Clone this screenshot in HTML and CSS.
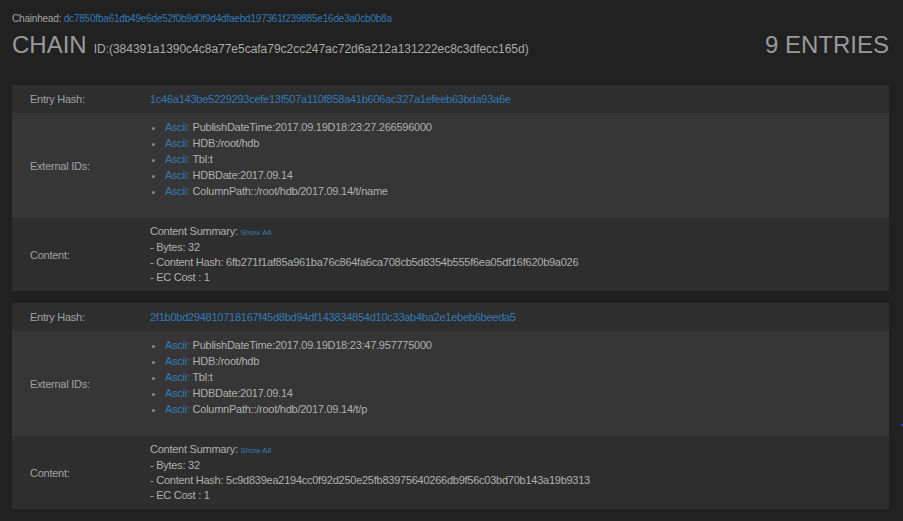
FILE: index.html
```html
<!DOCTYPE html>
<html lang="en">
<head>
<meta charset="utf-8">
<title>Chain</title>
<link rel="stylesheet" href="styles.css">
</head>
<body>
<div class="page">
  <header class="chain-header">
    <div class="chainhead">Chainhead: <a href="#" class="link">dc7850fba61db49e6de52f0b9d0f9d4dfaebd197361f239885e16de3a0cb0b8a</a></div>
    <div class="title-row">
      <h1 class="chain-title"><span class="chain-word">CHAIN</span><span class="chain-id">ID:(384391a1390c4c8a77e5cafa79c2cc247ac72d6a212a131222ec8c3dfecc165d)</span></h1>
      <div class="entries-count">9 ENTRIES</div>
    </div>
  </header>

  <table class="entry">
    <tr class="row-hash">
      <td class="label">Entry Hash:</td>
      <td class="value"><a href="#" class="link">1c46a143be5229293cefe13f507a110f858a41b606ac327a1efeeb63bda93a6e</a></td>
    </tr>
    <tr class="row-ids">
      <td class="label">External IDs:</td>
      <td class="value">
        <ul class="ext-ids">
          <li><span class="enc">Ascii:</span> PublishDateTime:2017.09.19D18:23:27.266596000</li>
          <li><span class="enc">Ascii:</span> HDB:/root/hdb</li>
          <li><span class="enc">Ascii:</span> Tbl:t</li>
          <li><span class="enc">Ascii:</span> HDBDate:2017.09.14</li>
          <li><span class="enc">Ascii:</span> ColumnPath::/root/hdb/2017.09.14/t/name</li>
        </ul>
      </td>
    </tr>
    <tr class="row-content">
      <td class="label">Content:</td>
      <td class="value content">
        <div>Content Summary: <a href="#" class="show-all">Show All</a></div>
        <div>- Bytes: 32</div>
        <div>- Content Hash: 6fb271f1af85a961ba76c864fa6ca708cb5d8354b555f6ea05df16f620b9a026</div>
        <div>- EC Cost : 1</div>
      </td>
    </tr>
  </table>

  <table class="entry">
    <tr class="row-hash">
      <td class="label">Entry Hash:</td>
      <td class="value"><a href="#" class="link">2f1b0bd294810718167f45d8bd94df143834854d10c33ab4ba2e1ebeb6beeda5</a></td>
    </tr>
    <tr class="row-ids">
      <td class="label">External IDs:</td>
      <td class="value">
        <ul class="ext-ids">
          <li><span class="enc">Ascii:</span> PublishDateTime:2017.09.19D18:23:47.957775000</li>
          <li><span class="enc">Ascii:</span> HDB:/root/hdb</li>
          <li><span class="enc">Ascii:</span> Tbl:t</li>
          <li><span class="enc">Ascii:</span> HDBDate:2017.09.14</li>
          <li><span class="enc">Ascii:</span> ColumnPath::/root/hdb/2017.09.14/t/p</li>
        </ul>
      </td>
    </tr>
    <tr class="row-content">
      <td class="label">Content:</td>
      <td class="value content">
        <div>Content Summary: <a href="#" class="show-all">Show All</a></div>
        <div>- Bytes: 32</div>
        <div>- Content Hash: 5c9d839ea2194cc0f92d250e25fb83975640266db9f56c03bd70b143a19b9313</div>
        <div>- EC Cost : 1</div>
      </td>
    </tr>
  </table>
</div>
<span class="edge-mark"></span>
</body>
</html>
```

FILE: styles.css
```css
html, body {
  margin: 0;
  padding: 0;
  background: #212121;
}

body {
  font-family: "Liberation Sans", Arial, sans-serif;
  color: #a9a9a9;
  font-size: 11px;
  position: relative;
  min-height: 521px;
}

.page {
  padding: 12px 14px 12px 12px;
}

.link {
  color: #337ab7;
  text-decoration: none;
}

.chainhead {
  font-size: 10px;
  letter-spacing: -0.2px;
  line-height: 14px;
  color: #a5a5a5;
}

.title-row {
  display: flex;
  align-items: baseline;
  justify-content: space-between;
  margin-top: 6px;
  margin-bottom: 23px;
}

.chain-title {
  margin: 0;
  display: flex;
  align-items: baseline;
  gap: 7px;
  font-weight: normal;
  line-height: 26px;
}

.chain-word {
  font-size: 24px;
  color: #9a9a9a;
}

.chain-id {
  font-size: 12px;
  color: #aaaaaa;
  letter-spacing: -0.02px;
}

.entries-count {
  font-size: 24px;
  line-height: 26px;
  color: #9a9a9a;
}

.entry {
  width: 100%;
  border-collapse: collapse;
  border-spacing: 0;
  margin-bottom: 12px;
  letter-spacing: -0.25px;
}

.entry td {
  padding: 0;
  vertical-align: middle;
}

.label {
  width: 120px;
  padding-left: 18px !important;
  color: #9ea2a6;
}

.row-hash {
  background: #2e2e2e;
}

.row-hash td {
  height: 28px;
  line-height: 16px;
  padding-top: 6px;
  padding-bottom: 6px;
  box-sizing: border-box;
}

.row-ids {
  background: #363636;
}

.row-ids td {
  padding-top: 6px !important;
  padding-bottom: 6px !important;
}

.row-content {
  background: #2e2e2e;
}

.row-content td {
  padding-top: 6px !important;
  padding-bottom: 6px !important;
}

.ext-ids {
  list-style: none;
  margin: 0 0 13px 0;
  padding: 0 0 0 2px;
  line-height: 16px;
  color: #b0b0b0;
}

.ext-ids li::before {
  content: "";
  display: inline-block;
  width: 3px;
  height: 3px;
  border-radius: 50%;
  background: #8a8a8a;
  margin-right: 10px;
  vertical-align: middle;
}

.enc {
  color: #337ab7;
}

.content {
  line-height: 15px;
  color: #b0b0b0;
}

.show-all {
  font-size: 8px;
  letter-spacing: 0;
  color: #337ab7;
  text-decoration: none;
}

.edge-mark {
  position: absolute;
  left: 901px;
  top: 424px;
  width: 2px;
  height: 2px;
  background: #2b3fd8;
}
```
